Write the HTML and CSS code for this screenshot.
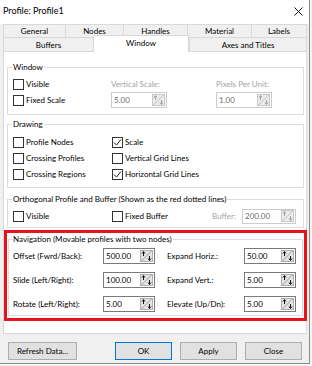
FILE: index.html
```html
<!DOCTYPE html>
<html>
<head>
<meta charset="utf-8">
<link rel="stylesheet" href="styles.css">
</head>
<body>
<div class="win">
  <div class="titlebar">
    <span class="title">Profile: Profile1</span>
    <svg class="close" width="9" height="9" viewBox="0 0 9 9"><path d="M0.5 0.5 L8.5 8.5 M8.5 0.5 L0.5 8.5" stroke="#111" stroke-width="1"/></svg>
  </div>
  <div class="content">
    <div class="tabs">
      <div class="tabrow back">
        <div class="tab w-general">General</div>
        <div class="tab w-nodes">Nodes</div>
        <div class="tab w-handles">Handles</div>
        <div class="tab w-material">Material</div>
        <div class="tab w-labels last">Labels</div>
      </div>
      <div class="tabrow front">
        <div class="tab w-buffers">Buffers</div>
        <div class="tab w-window sel">Window</div>
        <div class="tab w-axes last">Axes and Titles</div>
      </div>
    </div>
    <div class="panel">
      <fieldset class="grp g-window">
        <legend>Window</legend>
        <div class="grid3">
          <label class="chk"><span class="cb"></span>Visible</label>
          <span class="dis">Vertical Scale:</span>
          <span class="dis">Pixels Per Unit:</span>
          <label class="chk"><span class="cb"></span>Fixed Scale</label>
          <div class="spin disabled w56"><span>5.00</span><svg class="sp" width="13" height="12" viewBox="0 0 13 12"><rect x="0.5" y="0.5" width="12" height="11" fill="#ececec" stroke="#c8c8c8"/><path d="M1 11.5 L12 0.5" stroke="#c0c0c0"/><path d="M3.5 2 V6 M2 3.5 L3.5 1.5 L5 3.5 M9.5 6 V10 M8 8.5 L9.5 10.5 L11 8.5" stroke="#a0a0a0" fill="none"/></svg></div>
          <div class="spin disabled w56"><span>1.00</span><svg class="sp" width="13" height="12" viewBox="0 0 13 12"><rect x="0.5" y="0.5" width="12" height="11" fill="#ececec" stroke="#c8c8c8"/><path d="M1 11.5 L12 0.5" stroke="#c0c0c0"/><path d="M3.5 2 V6 M2 3.5 L3.5 1.5 L5 3.5 M9.5 6 V10 M8 8.5 L9.5 10.5 L11 8.5" stroke="#a0a0a0" fill="none"/></svg></div>
        </div>
      </fieldset>

      <fieldset class="grp g-drawing">
        <legend>Drawing</legend>
        <div class="grid2">
          <label class="chk"><span class="cb"></span>Profile Nodes</label>
          <label class="chk"><span class="cb on"><svg width="9" height="9" viewBox="0 0 9 9"><path d="M1 4.5 L3.5 7 L8 1.5" stroke="#222" fill="none" stroke-width="1"/></svg></span>Scale</label>
          <label class="chk"><span class="cb"></span>Crossing Profiles</label>
          <label class="chk"><span class="cb"></span>Vertical Grid Lines</label>
          <label class="chk"><span class="cb"></span>Crossing Regions</label>
          <label class="chk"><span class="cb on"><svg width="9" height="9" viewBox="0 0 9 9"><path d="M1 4.5 L3.5 7 L8 1.5" stroke="#222" fill="none" stroke-width="1"/></svg></span>Horizontal Grid Lines</label>
        </div>
      </fieldset>

      <fieldset class="grp g-ortho">
        <legend>Orthogonal Profile and Buffer (Shown as the red dotted lines)</legend>
        <div class="orow">
          <label class="chk c1"><span class="cb"></span>Visible</label>
          <label class="chk c2"><span class="cb"></span>Fixed Buffer</label>
          <span class="dis blabel">Buffer:</span>
          <div class="spin disabled w54"><span>200.00</span><svg class="sp" width="13" height="12" viewBox="0 0 13 12"><rect x="0.5" y="0.5" width="12" height="11" fill="#ececec" stroke="#c8c8c8"/><path d="M1 11.5 L12 0.5" stroke="#c0c0c0"/><path d="M3.5 2 V6 M2 3.5 L3.5 1.5 L5 3.5 M9.5 6 V10 M8 8.5 L9.5 10.5 L11 8.5" stroke="#a0a0a0" fill="none"/></svg></div>
        </div>
      </fieldset>

      <div class="highlight">
        <fieldset class="grp g-nav">
          <legend>Navigation (Movable profiles with two nodes)</legend>
          <div class="grid4">
            <span>Offset (Fwrd/Back):</span>
            <div class="spin w52"><span>500.00</span><svg class="sp" width="13" height="12" viewBox="0 0 13 12"><rect x="0.5" y="0.5" width="12" height="11" fill="#e4e4e4" stroke="#b0b0b0"/><path d="M1 11.5 L12 0.5" stroke="#9c9c9c"/><path d="M3.5 2 V6 M2 3.5 L3.5 1.5 L5 3.5 M9.5 6 V10 M8 8.5 L9.5 10.5 L11 8.5" stroke="#111" fill="none"/></svg></div>
            <span>Expand Horiz.:</span>
            <div class="spin w52"><span>50.00</span><svg class="sp" width="13" height="12" viewBox="0 0 13 12"><rect x="0.5" y="0.5" width="12" height="11" fill="#e4e4e4" stroke="#b0b0b0"/><path d="M1 11.5 L12 0.5" stroke="#9c9c9c"/><path d="M3.5 2 V6 M2 3.5 L3.5 1.5 L5 3.5 M9.5 6 V10 M8 8.5 L9.5 10.5 L11 8.5" stroke="#111" fill="none"/></svg></div>
            <span>Slide (Left/Right):</span>
            <div class="spin w52"><span>100.00</span><svg class="sp" width="13" height="12" viewBox="0 0 13 12"><rect x="0.5" y="0.5" width="12" height="11" fill="#e4e4e4" stroke="#b0b0b0"/><path d="M1 11.5 L12 0.5" stroke="#9c9c9c"/><path d="M3.5 2 V6 M2 3.5 L3.5 1.5 L5 3.5 M9.5 6 V10 M8 8.5 L9.5 10.5 L11 8.5" stroke="#111" fill="none"/></svg></div>
            <span>Expand Vert.:</span>
            <div class="spin w52"><span>5.00</span><svg class="sp" width="13" height="12" viewBox="0 0 13 12"><rect x="0.5" y="0.5" width="12" height="11" fill="#e4e4e4" stroke="#b0b0b0"/><path d="M1 11.5 L12 0.5" stroke="#9c9c9c"/><path d="M3.5 2 V6 M2 3.5 L3.5 1.5 L5 3.5 M9.5 6 V10 M8 8.5 L9.5 10.5 L11 8.5" stroke="#111" fill="none"/></svg></div>
            <span>Rotate (Left/Right):</span>
            <div class="spin w52"><span>5.00</span><svg class="sp" width="13" height="12" viewBox="0 0 13 12"><rect x="0.5" y="0.5" width="12" height="11" fill="#e4e4e4" stroke="#b0b0b0"/><path d="M1 11.5 L12 0.5" stroke="#9c9c9c"/><path d="M3.5 2 V6 M2 3.5 L3.5 1.5 L5 3.5 M9.5 6 V10 M8 8.5 L9.5 10.5 L11 8.5" stroke="#111" fill="none"/></svg></div>
            <span>Elevate (Up/Dn):</span>
            <div class="spin w52"><span>5.00</span><svg class="sp" width="13" height="12" viewBox="0 0 13 12"><rect x="0.5" y="0.5" width="12" height="11" fill="#e4e4e4" stroke="#b0b0b0"/><path d="M1 11.5 L12 0.5" stroke="#9c9c9c"/><path d="M3.5 2 V6 M2 3.5 L3.5 1.5 L5 3.5 M9.5 6 V10 M8 8.5 L9.5 10.5 L11 8.5" stroke="#111" fill="none"/></svg></div>
          </div>
        </fieldset>
      </div>
    </div>
    <div class="footer">
      <button class="btn w-refresh">Refresh Data...</button>
      <div class="spacer"></div>
      <button class="btn default">OK</button>
      <button class="btn">Apply</button>
      <button class="btn">Close</button>
    </div>
  </div>
</div>
</body>
</html>
```

FILE: styles.css
```css
* { box-sizing: border-box; }
html, body { margin: 0; padding: 0; }
body {
  background: #f4f4f4;
  font-family: Lato, "Noto Sans", sans-serif;
  font-size: 8px;
  color: #000;
}
.win {
  width: 310px;
  height: 364px;
  background: #f0f0f0;
  border-right: 1px solid #8c8c8c;
  border-bottom: 1px solid #8c8c8c;
  display: flex;
  flex-direction: column;
}
.titlebar {
  height: 24px;
  flex: none;
  background: #fff;
  display: flex;
  align-items: center;
  justify-content: space-between;
  padding: 0 6px 2px 3px;
}
.title { font-size: 9px; line-height: 12px; }
.content {
  flex: 1;
  display: flex;
  flex-direction: column;
  padding: 0 2px 0 3px;
}
.tabs { flex: none; height: 27px; }
.tabrow { display: flex; }
.tabrow.back { height: 13px; }
.tabrow.front { height: 14px; }
.tab {
  border-left: 1px solid #d9d9d9;
  border-top: 1px solid #d9d9d9;
  background: #f0f0f0;
  display: flex;
  align-items: center;
  justify-content: center;
  line-height: 10px;
}
.tab.last { border-right: 1px solid #d9d9d9; }
.tab.sel {
  background: #fff;
  border-right: 1px solid #d9d9d9;
  margin-top: -2px;
  height: 17px;
  position: relative;
  z-index: 1;
  padding-bottom: 3px;
}
.w-general { width: 62px; }
.w-nodes { width: 58px; }
.w-handles { width: 64px; }
.w-material { width: 64px; }
.w-labels { width: 56px; }
.w-buffers { width: 90px; }
.w-window { width: 96px; }
.w-axes { width: 118px; }

.panel {
  flex: none;
  height: 283px;
  background: #fff;
  border: 1px solid #d9d9d9;
  padding: 10px 2px 0 3px;
}
.grp {
  margin: 0;
  min-width: 0;
  border: 1px solid #dcdcdc;
  padding: 4px 4px 6px 5px;
}
.grp legend {
  padding: 0 1px;
  margin-left: -1px;
  line-height: 10px;
  height: 10px;
}
.g-drawing { margin-top: 4px; padding-top: 5px; padding-bottom: 5px; }
.g-ortho { margin-top: 6px; padding-top: 4px; padding-bottom: 3px; }

.grid3 {
  display: grid;
  grid-template-columns: 98px 105px 1fr;
  grid-auto-rows: 16px;
  align-items: center;
}
.grid2 {
  display: grid;
  grid-template-columns: 99px 1fr;
  grid-auto-rows: 16px;
  align-items: center;
}
.orow {
  display: flex;
  align-items: center;
  height: 16px;
}
.orow .c1 { width: 99px; }
.orow .c2 { width: 100px; }
.orow .blabel { width: 30px; }

.chk {
  display: flex;
  align-items: center;
  white-space: nowrap;
}
.cb {
  width: 11px;
  height: 11px;
  border: 1px solid #333;
  background: #fff;
  margin-right: 2px;
  flex: none;
  display: flex;
  align-items: center;
  justify-content: center;
}
.dis { color: #a3a3a3; white-space: nowrap; }

.spin {
  height: 16px;
  border: 1px solid #7a7a7a;
  background: #fff;
  display: flex;
  align-items: center;
  justify-content: space-between;
  padding: 0 1px 0 2px;
}
.spin.disabled { border-color: #cccccc; color: #6d6d6d; }
.orow .spin { height: 15px; }
.w56 { width: 56px; }
.w54 { width: 54px; }
.w52 { width: 52px; }
.sp { flex: none; display: block; }

.highlight {
  margin: 2px -3px 0 -3px;
  border: 3px solid #e8131b;
  padding: 1px 1px 2px 1px;
}
.g-nav { padding: 4px 4px 3px 4px; }
.grid4 {
  display: grid;
  grid-template-columns: 90px 64px 77px 52px;
  grid-auto-rows: 16px;
  row-gap: 8px;
  align-items: center;
  white-space: nowrap;
}

.footer {
  flex: none;
  display: flex;
  margin-top: 8px;
  padding: 0 5px;
  gap: 8px;
}
.spacer { flex: 1; }
.btn {
  font-family: inherit;
  font-size: 8px;
  color: #000;
  height: 18px;
  width: 57px;
  padding: 0;
  border: 1px solid #adadad;
  background: #e1e1e1;
  display: flex;
  align-items: center;
  justify-content: center;
}
.btn.w-refresh { width: 69px; }
.btn.default { border-color: #0078d7; }
```
